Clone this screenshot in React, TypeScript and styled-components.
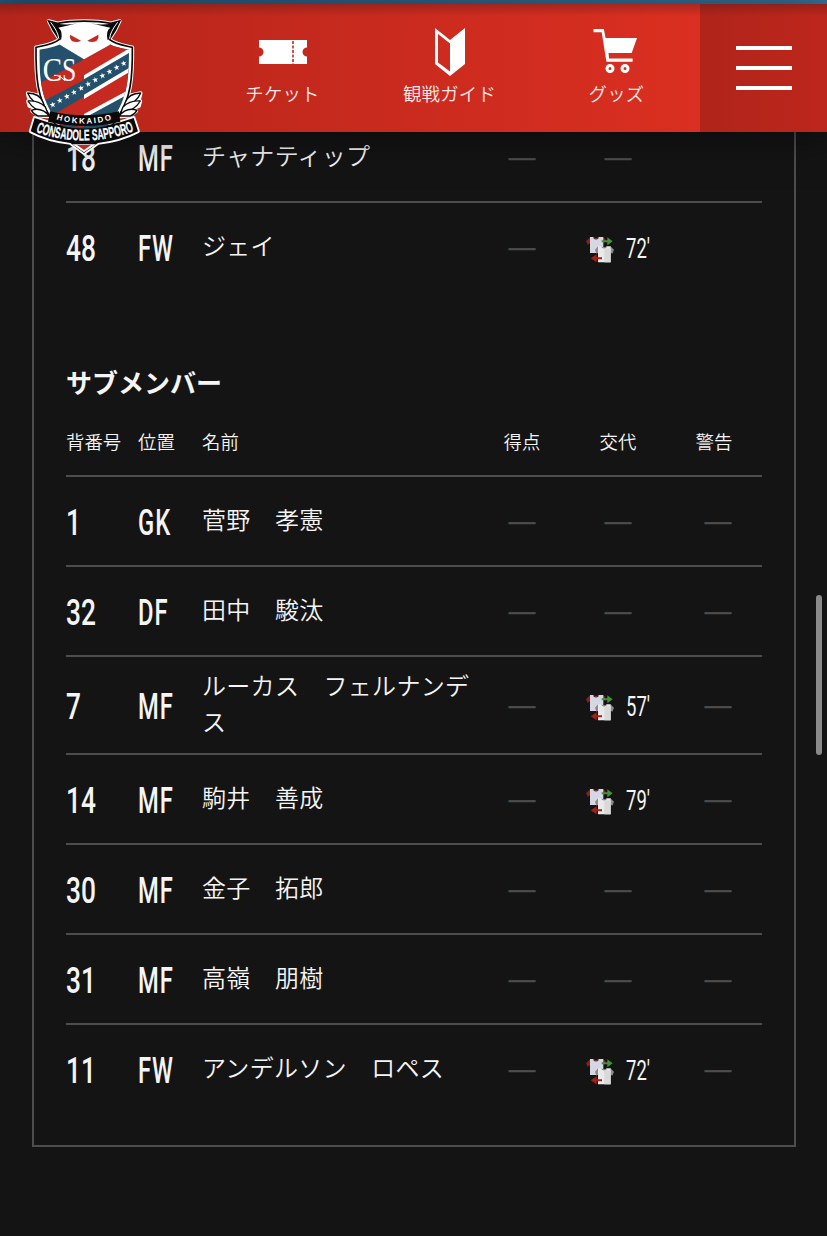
import styled, { createGlobalStyle } from "styled-components"

const GlobalStyle = createGlobalStyle`
    * {
        box-sizing: border-box;
    }
    body {
        margin: 0;
        background: #141414;
        color: #f5f5f5;
        font-family: 'Noto Sans CJK JP', sans-serif;
        font-weight: 350;
    }
`
const Page = styled.div`
    position: relative;
    height: 1236px;
    overflow: hidden;
`
const TopLine = styled.div`
    height: 4px;
    background: linear-gradient(90deg, #23557b, #37749e);
`
const Header = styled.header`
    position: relative;
    z-index: 1;
    display: flex;
    justify-content: flex-end;
    height: 128px;
    background: linear-gradient(90deg, #b4241a, #da2f21 700px);
    box-shadow: 0 4px 36px rgba(0, 0, 0, 0.5);
`
const HeaderShade = styled.div`
    position: absolute;
    inset: 0 0 auto;
    height: 12px;
    background: linear-gradient(rgba(60, 20, 20, 0.3), rgba(60, 20, 20, 0));
`
const Logo = styled.svg`
    position: absolute;
    left: 24px;
    top: 14px;
    width: 119px;
    height: 140px;
`
const Nav = styled.nav`
    display: flex;
    width: 501px;
`
const NavItem = styled.a`
    flex: 1;
    display: flex;
    flex-direction: column;
    align-items: center;
    padding-top: 23px;
    color: #fff;
    font-size: 18.4px;
    letter-spacing: 0.2px;
    line-height: 28px;

    svg {
        width: 50px;
        height: 50px;
        margin-bottom: 2px;
    }
    span {
        opacity: 0.9;
    }
`
const MenuButton = styled.button`
    display: flex;
    flex-direction: column;
    gap: 16px;
    width: 127px;
    padding: 42px 35px 0 36px;
    border: 0;
    background: linear-gradient(90deg, #b0241a, #bd261b);
`
const MenuBar = styled.span`
    height: 4px;
    background: #fff;
`
const Card = styled.main`
    display: flow-root;
    height: 1015px;
    margin: 0 31px 0 32px;
    padding: 0 32px;
    border: 2px solid #4d4d4d;
    border-top: 0;
`
const StarterList = styled.section`
    margin-top: -19px;
`
const SubList = styled.section`
    margin-top: 69px;
`
const Title = styled.h2`
    margin: 0;
    font-size: 26px;
    font-weight: 700;
    line-height: 40px;
`
const Row = styled.div<{ $last?: boolean }>`
    display: grid;
    grid-template-columns: 72px 64px 272px 96px 96px 96px;
    align-items: center;
    min-height: 90px;
    padding: 12px 0;
    border-bottom: 2px solid ${({ $last }) => ($last ? "transparent" : "#4d4d4d")};
`
const HeadRow = styled(Row)`
    min-height: 75px;
    padding: 5px 0 0;
    font-size: 18.4px;
    line-height: 28px;
`
const Condensed = styled.div`
    padding-top: 3px;
    font-family: Roboto, sans-serif;
    font-size: 36.5px;
    font-weight: 500;
    line-height: 40px;
    transform-origin: left center;
    white-space: nowrap;
`
const Num = styled(Condensed)`
    transform: scaleX(0.72);
`
const Position = styled(Condensed)`
    letter-spacing: 1.5px;
    transform: scaleX(0.65);
`
const Name = styled.div`
    position: relative;
    top: -2px;
    font-size: 24px;
    line-height: 36px;
    letter-spacing: 0.3px;
    word-break: break-all;
`
const Center = styled.div`
    text-align: center;
`
const Dash = styled.div<{ $shift?: boolean }>`
    padding-left: ${({ $shift }) => ($shift ? 8 : 0)}px;
    color: #4d4d4d;
    font-family: 'Liberation Sans', sans-serif;
    font-size: 26.5px;
    line-height: 30px;
    text-align: center;
    -webkit-text-stroke: 0.5px #4d4d4d;
`
const Swap = styled.div`
    display: flex;
    align-items: center;
    gap: 12px;
    padding-left: 16px;

    svg {
        flex: none;
        width: 28px;
        height: 28px;
        margin-top: 4px;
    }
`
const Minute = styled(Condensed)`
    font-size: 28px;
    font-weight: 400;
    transform: scaleX(0.66);
`
const ScrollThumb = styled.div`
    position: absolute;
    z-index: 2;
    left: 816px;
    top: 595px;
    width: 6px;
    height: 160px;
    border-radius: 3px;
    background: #8a8a8a;
`

type Player = {
    num: number
    pos: string
    name: string
    swap?: string
    noCard?: boolean
}

const starters: Player[] = [
    { num: 18, pos: "MF", name: "チャナティップ", noCard: true },
    { num: 48, pos: "FW", name: "ジェイ", swap: "72'", noCard: true },
]
const subs: Player[] = [
    { num: 1, pos: "GK", name: "菅野　孝憲" },
    { num: 32, pos: "DF", name: "田中　駿汰" },
    { num: 7, pos: "MF", name: "ルーカス　フェルナンデス", swap: "57'" },
    { num: 14, pos: "MF", name: "駒井　善成", swap: "79'" },
    { num: 30, pos: "MF", name: "金子　拓郎" },
    { num: 31, pos: "MF", name: "高嶺　朋樹" },
    { num: 11, pos: "FW", name: "アンデルソン　ロペス", swap: "72'" },
]

const SwapIcon = () => (
    <svg viewBox="48 46 84 84">
        <path d="M60 53L48 65l5 10 8-5zM98 53l8 4v10h-8z" fill="#8f1d17" />
        <path d="M60 52h10q8 8 16 0h14v48H60z" fill="#d5d7e2" />
        <path d="M70 52q8 8 16 0v4q-8 7-16 0z" fill="#5c2024" />
        <path d="M95 62h17v-9l16 12-16 12v-9H95z" fill="#43913a" />
        <path d="M84 80l-9 10 4 12 8-5zM121 80l11 10-5 12-8-5z" fill="#8b8b8b" />
        <path d="M84 80h11q7 7 15 0h12v48H84z" fill="#e9e9ea" />
        <path d="M95 80q7 7 15 0v3q-7 7-15 0z" fill="#777" />
        <path d="M103 86h19v42h-19z" fill="#d9d9da" />
        <path d="M96 113H80v-9l-18 12 18 12v-9h16z" fill="#a51e18" />
    </svg>
)

const TicketIcon = () => (
    <svg viewBox="0 0 50 50" fill="#fff">
        <path d="M1 13h48v7.500a4.500 4.500 0 0 0 0 9V37H1v-7.500a4.500 4.500 0 0 0 0-9z" />
        <path d="M35 14v23" stroke="#c4291d" strokeWidth="1.600" strokeDasharray="3 1.500" />
    </svg>
)

const GuideIcon = () => (
    <svg viewBox="0 0 50 50" fill="#fff">
        <path d="M10 1l15 12L40 1v36L25 49 10 37zM13 7v28.500l12 9V16.500z" fillRule="evenodd" />
    </svg>
)

const CartIcon = () => (
    <svg viewBox="0 0 50 50" fill="#fff">
        <path d="M1.500 2h10.300l1.800 9H45l-5.300 15H16.500l.6 5.500h23.500v3.300H14.400L9.700 5.300H1.500z" />
        <g fill="none" stroke="#fff" strokeWidth="3">
            <circle cx="18" cy="41.500" r="3" />
            <circle cx="33" cy="41.500" r="3" />
        </g>
    </svg>
)

const SHIELD =
    "M78 142C105 136 132 132 148 118L130 90 116 63 142 70C190 61 255 61 303 70L329 63 316 90 298 118C314 132 341 136 367 142C368 235 362 295 325 350C295 400 245 435 222 453C199 435 150 400 120 350C83 295 77 235 78 142Z"
const INNER =
    "M88 149C120 145 140 137 152 132H298C310 139 330 144 357 149C357 232 352 288 318 342C288 392 240 428 222 442C204 428 156 392 127 342C93 288 88 232 88 149Z"
const FEATHERS = "M122 350L84 347 66 333 82 327 58 318 54 303 72 305 56 293 53 279 84 286Q112 298 122 350Z"
const RIBBON = "M74 354Q222 409 371 354L384 394Q332 421 264 429L222 459 181 429Q112 421 62 394Z"

const stars = Array.from({ length: 11 }, (_, i) => ({ x: 128 + i * 21.3, y: 314 - i * 12.4 }))

const ClubLogo = () => (
    <Logo viewBox="42 54 357 420">
        <defs>
            <clipPath id="shield">
                <path d={INNER} />
            </clipPath>
            <path id="arc-top" d="M139 358Q222 384 308 358" />
            <path id="arc-name" d="M77 396Q222 448 371 394" />
        </defs>
        <g fill="#fff" stroke="#fff" strokeWidth="11" strokeLinejoin="round">
            <path d={SHIELD} />
            <path d={FEATHERS} />
            <path d={FEATHERS} transform="matrix(-1 0 0 1 445 0)" />
            <path d={RIBBON} />
        </g>
        <path d={SHIELD} fill="#fff" stroke="#090909" strokeWidth="5" />
        <g clipPath="url(#shield)">
            <path d="M80 130H370V460H80z" fill="#24506c" />
            <path d="M80 254L222 178 300 132H370V140L222 228V240L80 314z" fill="#c6291f" />
            <path d="M80 374L222 290 370 201V262L222 350V470H80z" fill="#c6291f" />
            <path d="M222 226L370 138V151L222 238zM222 284L370 196V209L222 297zM222 342L370 262V274L222 355z" fill="#fff" />
            <path d="M146 132L222 178 304 132z" fill="#fff" />
        </g>
        <path
            d="M116 63Q156 80 202 70Q170 78 145 83Q160 92 153 121L128 90zM329 63Q288 80 242 70Q275 78 301 83Q286 92 293 121L317 90z"
            fill="#090909"
        />
        <path d="M122 67Q145 96 146 116M323 67Q300 96 299 116" fill="none" stroke="#fff" strokeWidth="3" />
        <path d="M180 104L213 122Q202 129 187 124 178 116 180 104zM265 104L232 122Q243 129 258 124 267 116 265 104z" fill="#c6291f" />
        <g fill="#fff">
            {stars.map(({ x, y }) => (
                <path
                    key={x}
                    d="M0-9L2-3H9L3.500 1.500 5.500 8 0 4-5.500 8-3.500 1.500-9-3h7z"
                    transform={`translate(${x} ${y}) rotate(-12)`}
                />
            ))}
        </g>
        <g fill="#fff" fontFamily="'Liberation Serif', serif" fontSize="104">
            <text x="98" y="242" textLength="58" lengthAdjust="spacingAndGlyphs">C</text>
            <text x="156" y="242" textLength="43" lengthAdjust="spacingAndGlyphs">S</text>
        </g>
        <path d="M132 226Q148 224 164 242" fill="none" stroke="#fff" strokeWidth="3" />
        {["", "matrix(-1 0 0 1 445 0)"].map(transform => (
            <g key={transform} transform={transform} fill="#fff" stroke="#090909" strokeWidth="4" strokeLinejoin="round">
                <path d="M53 279Q89 280 99 307L104 321Q65 309 53 279z" />
                <path d="M54 303Q86 301 106 321L113 339Q72 334 54 303z" />
                <path d="M64 331Q94 320 118 348L84 348Q72 344 64 331z" />
            </g>
        ))}
        <path d="M120 334Q222 358 327 334L331 365Q222 391 114 365z" fill="#090909" />
        <path d={RIBBON} fill="#090909" />
        <path d="M150 373Q222 390 296 373L288 379Q222 392 158 379z" fill="#24506c" />
        <path d="M187 433L222 457 258 433z" fill="#fff" />
        <path d="M200 434Q222 436 244 434L222 450z" fill="#c6291f" />
        <g fill="#fff" fontFamily="'Liberation Sans', sans-serif" fontWeight="700">
            <text fontSize="24">
                <textPath href="#arc-top" textLength="168">HOKKAIDO</textPath>
            </text>
            <text fontSize="46" stroke="#fff" strokeWidth="0.8">
                <textPath href="#arc-name" textLength="302" lengthAdjust="spacingAndGlyphs">CONSADOLE SAPPORO</textPath>
            </text>
        </g>
    </Logo>
)

const PlayerRow = ({ player, last }: { player: Player; last?: boolean }) => (
    <Row $last={last}>
        <Num>{player.num}</Num>
        <Position>{player.pos}</Position>
        <Name>{player.name}</Name>
        <Dash>—</Dash>
        {player.swap ? (
            <Swap>
                <SwapIcon />
                <Minute>{player.swap}</Minute>
            </Swap>
        ) : (
            <Dash>—</Dash>
        )}
        {!player.noCard && <Dash $shift>—</Dash>}
    </Row>
)

const App = () => {
    return (
        <Page>
            <GlobalStyle />
            <TopLine />
            <Header>
                <Nav>
                    <NavItem>
                        <TicketIcon />
                        <span>チケット</span>
                    </NavItem>
                    <NavItem>
                        <GuideIcon />
                        <span>観戦ガイド</span>
                    </NavItem>
                    <NavItem>
                        <CartIcon />
                        <span>グッズ</span>
                    </NavItem>
                </Nav>
                <MenuButton>
                    <MenuBar />
                    <MenuBar />
                    <MenuBar />
                </MenuButton>
                <HeaderShade />
                <ClubLogo />
            </Header>
            <Card>
                <StarterList>
                    {starters.map((player, i) => (
                        <PlayerRow key={player.num} player={player} last={i === starters.length - 1} />
                    ))}
                </StarterList>
                <SubList>
                    <Title>サブメンバー</Title>
                    <HeadRow>
                        <div>背番号</div>
                        <div>位置</div>
                        <div>名前</div>
                        <Center>得点</Center>
                        <Center>交代</Center>
                        <Center>警告</Center>
                    </HeadRow>
                    {subs.map((player, i) => (
                        <PlayerRow key={player.num} player={player} last={i === subs.length - 1} />
                    ))}
                </SubList>
            </Card>
            <ScrollThumb />
        </Page>
    )
}

export default App
